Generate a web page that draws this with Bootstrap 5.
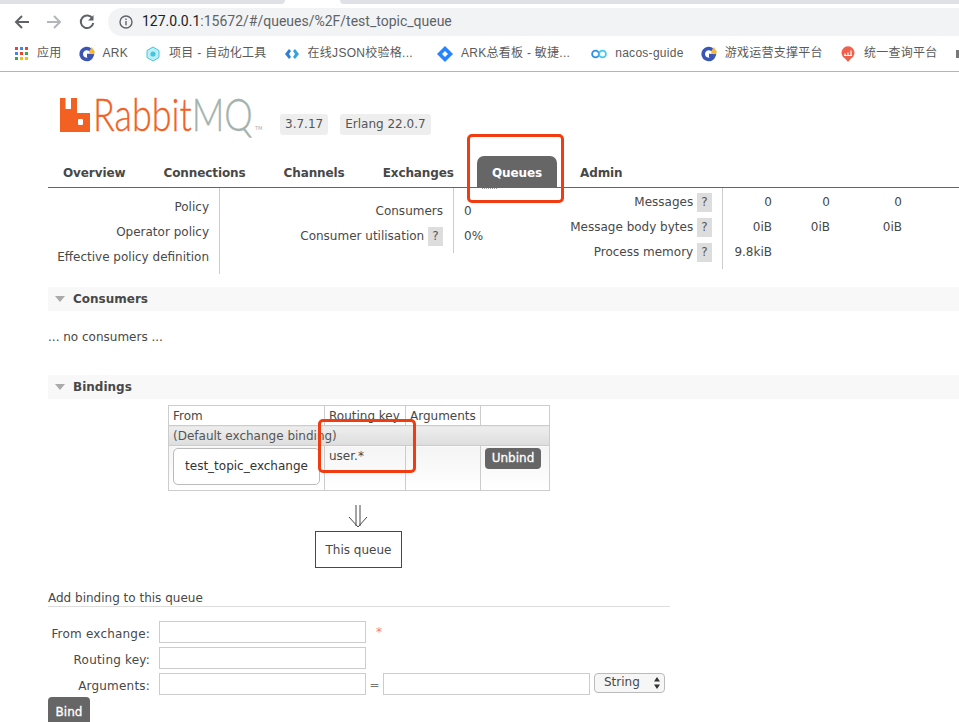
<!DOCTYPE html>
<html lang="en">
<head>
<meta charset="UTF-8">
<meta name="viewport" content="width=device-width, initial-scale=1.0">
<title>RabbitMQ Management</title>
<link href="https://cdn.jsdelivr.net/npm/bootstrap@5.3.0/dist/css/bootstrap.min.css" rel="stylesheet">
<style>
html, body { height: 722px; overflow: hidden; }
body { font-family: "DejaVu Sans", Verdana, sans-serif; font-size: 12px; color: #484848; background: #fff; position: relative; line-height: 1.25; }

/* browser chrome */
.tabstrip { height: 4px; display: flex; background: #fff; }
.tabstrip-gray { background: #dee1e6; height: 4px; }
.tabstrip-left { width: 285px; border-bottom-right-radius: 4px; }
.tabstrip-right { flex: 1; margin-left: 55px; border-bottom-left-radius: 4px; }
.toolbar { height: 32px; padding-top: 4px; }
.tool-icon { width: 18px; height: 18px; flex: none; }
.tool-back { margin-left: 13px; }
.tool-forward { margin-left: 14px; }
.tool-reload { margin-left: 15px; }
.addressbar { margin-left: 12px; flex: 1; height: 28px; background: #f1f3f4; border-radius: 14px 0 0 14px; padding-left: 11px; font-family: Roboto, "Liberation Sans", sans-serif; font-size: 14px; color: #5f6368; }
.addressbar svg { width: 14px; height: 14px; margin-right: 9px; }
.addressbar b { font-weight: 400; color: #202124; }
.bookmarks { height: 36px; border-bottom: 1px solid #b4b4b4; padding-left: 15px; font-family: "Liberation Sans", "Noto Sans CJK SC", sans-serif; font-size: 12px; letter-spacing: .28px; color: #5a5a5a; white-space: nowrap; gap: 17px; overflow: hidden; }
.bm-item { display: flex; align-items: center; gap: 8px; flex: none; }
.bm-item svg { width: 16px; height: 16px; flex: none; }
.bm-grid { width: 14px !important; height: 14px !important; }
.bm-wide { margin-right: 7px; }
.bm-mid { margin-right: 4px; }
.bm-last { margin-left: 1px; }

/* rabbit header */
.rmq-page { padding: 0 0 0 48px; }
.rmq-header { height: 84px; }
.rmq-logo { display: flex; align-items: flex-end; margin-left: 12px; margin-top: 24px; height: 36px; width: 220px; }
.rmq-logo svg { width: 30px; height: 34px; flex: none; }
.logo-text { font-family: Lato, "Open Sans", sans-serif; font-weight: 300; font-size: 46px; line-height: 36px; color: #f26122; -webkit-text-stroke: .35px; margin-left: 3px; width: 160px; flex: none; white-space: nowrap; transform: scaleX(.78); transform-origin: left center; }
.logo-text span { color: #a3b2ad; }
.logo-tm { font-size: 5px; color: #aaa; margin: 0 0 1px 2px; flex: none; }
.ver-tag { background: #eee; border-radius: 3px; padding: 0 5px; height: 21px; line-height: 21px; font-size: 12px; margin-top: 42px; margin-right: 12px; color: #555; }

/* tabs */
.rmq-tabs { border-bottom: 1px solid #666; height: 32px; padding-left: 0; flex-wrap: nowrap; position: relative; }
.rmq-tabs .nav-link { font-weight: 700; font-size: 12px; letter-spacing: -.1px; color: #484848; padding: 10px 15px 0; margin-right: 8px; height: 31px; line-height: 15px; white-space: nowrap; }
.rmq-tabs .nav-link.active { background: #666; color: #fff; border-radius: 7px 7px 0 0; }
.tab-dots { position: absolute; left: 434px; top: 32px; width: 15px; border-top: 1px dotted #999; }

/* summary */
.summary { height: 99px; }
.sum-tbl td, .sum-tbl th { padding: 0; font-weight: 400; height: 25px; white-space: nowrap; vertical-align: middle; }
.sum-box { border-right: 1px solid #ccc; padding-right: 10px; }
.sum-policy { width: 172px; height: 86px; padding-top: 7px; text-align: right; }
.sum-cons { width: 234px; height: 65px; padding-top: 11px; padding-right: 10px; text-align: right; }
.sum-cons-val { width: 104px; padding: 11px 0 0 10px; }
.sum-msg { width: 165px; padding-top: 2px; text-align: right; height: 81px; }
.sum-msg-num { padding-top: 2px; margin-left: -1px; }
.sum-msg-num td { text-align: right; }
.col-v1 { width: 50px; }
.col-v2 { width: 58px; }
.col-v3 { width: 72px; }
.help-q { display: inline-block; width: 15px; height: 19px; line-height: 19px; background: #ddd; text-align: center; color: #555; }

/* sections */
.sect-head { background: #f8f8f8; height: 24px; line-height: 24px; font-weight: 700; color: #484848; padding-left: 7px; display: flex; align-items: center; }
.sect-arrow { width: 0; height: 0; border-left: 5px solid transparent; border-right: 5px solid transparent; border-top: 6px solid #aaa; margin-right: 8px; }
.none-msg { height: 64px; padding-top: 19px; }

/* bindings */
.bind-wrap { margin-left: 120px; margin-top: 6px; width: 382px; }
.bind-tbl { width: 381px; border-collapse: collapse; margin: 0; table-layout: fixed; }
.bind-tbl th, .bind-tbl td { border: 1px solid #ccc; padding: 1px 4px 0; font-weight: 400; color: #484848; background: none; box-shadow: none; vertical-align: top; }
.bind-tbl th { height: 20px; line-height: 18px; }
.bind-default td { height: 20px; line-height: 18px; background: linear-gradient(#eee, #ddd); color: #555; }
.bind-row td { height: 45px; background: linear-gradient(#f4f4f4, #fff); padding-top: 3px; }
.exch-box { display: block; width: 147px; height: 37px; line-height: 35px; margin-top: -1px; background: #fff; border: 1px solid #bbb; border-radius: 5px; text-align: center; color: #333; white-space: nowrap; }
.btn-unbind { background: #666; color: #fff; border: 0; border-radius: 4px; font-size: 12px; font-weight: 400; -webkit-text-stroke: .3px #fff; padding: 0; width: 56px; height: 21px; line-height: 21px; margin: -1px 0 0 0; display: block; }
.arrow-down { display: block; margin: 14px auto 4px; width: 24px; height: 22px; position: relative; left: -1px; }
.queue-box { width: 87px; height: 37px; line-height: 37px; border: 1px solid #484848; text-align: center; margin: 0 0 0 147px; }

/* add binding */
.add-title { width: 622px; margin-top: 23px; height: 16px; border-bottom: 1px solid #ddd; line-height: 15px; font-weight: 400; font-size: 12px; margin-bottom: 0; color: #484848; }
.add-form { margin-top: 14px; width: 640px; display: flex; flex-direction: column; gap: 4px; }
.add-row { display: flex; align-items: center; height: 22px; }
.add-label { width: 102px; text-align: right; margin: 4px 9px 0 0; white-space: nowrap; letter-spacing: .2px; }
.add-input { width: 207px; height: 22px; border: 1px solid #ccc; border-radius: 0; padding: 0 3px; font-size: 12px; flex: none; }
.req-star { color: #f77; margin-left: 10px; }
.eq-sign { width: 17px; text-align: center; color: #777; margin-top: 3px; }
.add-select { width: 71px; height: 20px; margin-left: 4px; padding: 0 0 0 9px; font-size: 12px; border: 1px solid #bbb; border-radius: 4px; background: #f6f6f6; color: #484848; margin-top: -3px; display: flex; align-items: center; justify-content: space-between; }
.add-select svg { width: 8px; height: 12px; margin-right: 3px; }
.btn-bind { background: #666; color: #fff; border: 0; border-radius: 4px 4px 0 0; font-size: 12px; font-weight: 400; -webkit-text-stroke: .3px #fff; width: 42px; height: 30px; padding: 0; margin-top: 2px; }
.btn-bind:hover, .btn-unbind:hover { background: #666; color: #fff; }

/* red annotation boxes drawn over the page */
.note-box { position: absolute; border: 3px solid #f13c12; border-radius: 5px; pointer-events: none; }
.note-tabs { left: 467px; top: 134px; width: 97px; height: 69px; }
.note-key { left: 318px; top: 419px; width: 98px; height: 54px; }
</style>
</head>
<body>

<!-- barra del navegador -->
<div class="tabstrip"><div class="tabstrip-gray tabstrip-left"></div><div class="tabstrip-gray tabstrip-right"></div></div>
<div class="toolbar d-flex align-items-center">
  <svg class="tool-icon tool-back" viewBox="0 0 18 18" fill="none" stroke="#5f6368" stroke-width="2"><path d="M16 9H3M9 3 3 9l6 6"/></svg>
  <svg class="tool-icon tool-forward" viewBox="0 0 18 18" fill="none" stroke="#b4b6b9" stroke-width="2"><path d="M2 9h13M9 3l6 6-6 6"/></svg>
  <svg class="tool-icon tool-reload" viewBox="0 0 18 18" fill="none" stroke="#5f6368" stroke-width="2"><path d="M14.5 5.5A6.3 6.3 0 1 0 15.3 10"/><path d="M15.5 2v5.500H10z" fill="#5f6368" stroke="none"/></svg>
  <div class="addressbar d-flex align-items-center">
    <svg viewBox="0 0 14 14" fill="none" stroke="#5f6368" stroke-width="1.4"><circle cx="7" cy="7" r="6"/><path d="M7 6v4.200M7 3.400v1.500"/></svg>
    <span><b>127.0.0.1</b>:15672/#/queues/%2F/test_topic_queue</span>
  </div>
</div>
<div class="bookmarks d-flex align-items-center">
  <div class="bm-item">
    <svg class="bm-grid" viewBox="0 0 14 14"><rect width="3" height="3" fill="#ea4335"/><rect x="5" width="3" height="3" fill="#4285f4"/><rect x="10" width="3" height="3" fill="#ea4335"/><rect y="5" width="3" height="3" fill="#4285f4"/><rect x="5" y="5" width="3" height="3" fill="#ea4335"/><rect x="10" y="5" width="3" height="3" fill="#34a853"/><rect y="10" width="3" height="3" fill="#34a853"/><rect x="5" y="10" width="3" height="3" fill="#fbbc05"/><rect x="10" y="10" width="3" height="3" fill="#fbbc05"/></svg>
    应用
  </div>
  <div class="bm-item">
    <svg viewBox="0 0 16 16"><path d="M11.500 4A5.500 5.500 0 1 0 13 9.500H8" fill="none" stroke="#3b55b5" stroke-width="3.600"/><path d="M12.700 1 15.800 5.500a2 2 0 0 1-5.600 0z" fill="#f5b83d"/></svg>
    ARK
  </div>
  <div class="bm-item">
    <svg viewBox="0 0 16 16"><path d="M8 1l6 3.500v7L8 15l-6-3.500v-7z" fill="#bfeef5" stroke="#45c6dc"/><circle cx="8" cy="8" r="2.600" fill="#45c6dc"/></svg>
    项目 - 自动化工具
  </div>
  <div class="bm-item bm-wide">
    <svg viewBox="0 0 16 16"><path d="M5 3 1 8l4 5 2-2-2-3 2-3z" fill="#2f7fd6"/><path d="M11 3l4 5-4 5-2-2 2-3-2-3z" fill="#2fa3e6"/></svg>
    在线JSON校验格...
  </div>
  <div class="bm-item bm-mid">
    <svg viewBox="0 0 16 16"><path d="M8 0l8 8-8 8-8-8z" fill="#2684ff"/><path d="M8 5l3 3-3 3-3-3z" fill="#fff"/></svg>
    ARK总看板 - 敏捷...
  </div>
  <div class="bm-item">
    <svg viewBox="0 0 16 16" fill="none" stroke-width="1.800"><circle cx="4.500" cy="8" r="3.400" stroke="#2f8fe8"/><circle cx="11.500" cy="8" r="3.400" stroke="#3fc8f0"/></svg>
    nacos-guide
  </div>
  <div class="bm-item">
    <svg viewBox="0 0 16 16"><path d="M11.500 4A5.500 5.500 0 1 0 13 9.500H8" fill="none" stroke="#3b55b5" stroke-width="3.600"/><path d="M12.700 1 15.800 5.500a2 2 0 0 1-5.600 0z" fill="#f5b83d"/></svg>
    游戏运营支撑平台
  </div>
  <div class="bm-item">
    <svg viewBox="0 0 16 16"><path d="M8 16 5 12.500A6.500 6.500 0 1 1 11 12.500z" fill="#f0604d"/><path d="M4 9.500h8M5 9V7.500M8 9V6.500M11 9V4.500" fill="none" stroke="#fff" stroke-width="1.200"/></svg>
    统一查询平台
  </div>
  <div class="bm-item bm-last">
    <svg viewBox="0 0 16 16"><rect x="0" y="4" width="8" height="8" fill="#777"/></svg>
  </div>
</div>

<!-- RabbitMQ -->
<div class="rmq-page">
  <div class="rmq-header d-flex">
    <div class="rmq-logo">
      <svg viewBox="0 0 30 34"><path fill="#f26122" fill-rule="evenodd" d="M0 0h5.500v11H11V0h6v15h13v19H0zM19 21a1 1 0 0 0-1 1v4a1 1 0 0 0 1 1h3a1 1 0 0 0 1-1v-4a1 1 0 0 0-1-1z"/></svg>
      <div class="logo-text">Rabbit<span>MQ</span></div>
      <div class="logo-tm">TM</div>
    </div>
    <div class="ver-tag">3.7.17</div>
    <div class="ver-tag">Erlang 22.0.7</div>
  </div>

  <ul class="nav rmq-tabs">
    <li class="nav-item"><a class="nav-link" href="#">Overview</a></li>
    <li class="nav-item"><a class="nav-link" href="#">Connections</a></li>
    <li class="nav-item"><a class="nav-link" href="#">Channels</a></li>
    <li class="nav-item"><a class="nav-link" href="#">Exchanges</a></li>
    <li class="nav-item"><a class="nav-link active" href="#">Queues</a></li>
    <li class="nav-item"><a class="nav-link" href="#">Admin</a></li>
    <li class="tab-dots"></li>
  </ul>

  <div class="summary d-flex">
    <div class="sum-box sum-policy">
      <table class="sum-tbl ms-auto"><tr><td>Policy</td></tr><tr><td>Operator policy</td></tr><tr><td>Effective policy definition</td></tr></table>
    </div>
    <div class="sum-box sum-cons">
      <table class="sum-tbl ms-auto">
        <tr><td>Consumers</td></tr>
        <tr><td>Consumer utilisation <span class="help-q">?</span></td></tr>
      </table>
    </div>
    <div class="sum-cons-val">
      <table class="sum-tbl"><tr><td>0</td></tr><tr><td>0%</td></tr></table>
    </div>
    <div class="sum-box sum-msg">
      <table class="sum-tbl ms-auto">
        <tr><td>Messages <span class="help-q">?</span></td></tr>
        <tr><td>Message body bytes <span class="help-q">?</span></td></tr>
        <tr><td>Process memory <span class="help-q">?</span></td></tr>
      </table>
    </div>
    <div class="sum-msg-num">
      <table class="sum-tbl">
        <tr><td class="col-v1">0</td><td class="col-v2">0</td><td class="col-v3">0</td></tr>
        <tr><td>0iB</td><td>0iB</td><td>0iB</td></tr>
        <tr><td>9.8kiB</td><td></td><td></td></tr>
      </table>
    </div>
  </div>

  <div class="sect-head"><span class="sect-arrow"></span>Consumers</div>
  <div class="none-msg">... no consumers ...</div>

  <div class="sect-head"><span class="sect-arrow"></span>Bindings</div>
  <div class="bind-wrap">
    <table class="bind-tbl">
      <colgroup><col style="width:156px"><col style="width:81px"><col style="width:75px"><col style="width:69px"></colgroup>
      <tr><th>From</th><th>Routing key</th><th>Arguments</th><th></th></tr>
      <tr class="bind-default"><td colspan="4">(Default exchange binding)</td></tr>
      <tr class="bind-row">
        <td><span class="exch-box">test_topic_exchange</span></td>
        <td>user.*</td>
        <td></td>
        <td><button type="button" class="btn btn-unbind">Unbind</button></td>
      </tr>
    </table>
    <svg class="arrow-down" viewBox="0 0 24 22" fill="none" stroke="#484848"><path d="M10 0v21M14 0v21M3 12l9 10 9-10"/></svg>
    <div class="queue-box">This queue</div>
  </div>

  <h3 class="add-title">Add binding to this queue</h3>
  <form class="add-form" onsubmit="return false">
    <div class="add-row">
      <label class="add-label">From exchange:</label>
      <input class="form-control add-input" type="text">
      <span class="req-star">*</span>
    </div>
    <div class="add-row">
      <label class="add-label">Routing key:</label>
      <input class="form-control add-input" type="text">
    </div>
    <div class="add-row">
      <label class="add-label">Arguments:</label>
      <input class="form-control add-input" type="text">
      <span class="eq-sign">=</span>
      <input class="form-control add-input" type="text">
      <div class="add-select">String <svg viewBox="0 0 8 12" fill="#333"><path d="M4 0l3 4.500H1zM4 12 1 7.500h6z"/></svg></div>
    </div>
  </form>
  <button type="button" class="btn btn-bind">Bind</button>
</div>

<!-- recuadros rojos de la captura -->
<div class="note-box note-tabs"></div>
<div class="note-box note-key"></div>

<script src="https://cdn.jsdelivr.net/npm/bootstrap@5.3.0/dist/js/bootstrap.bundle.min.js"></script>
</body>
</html>
